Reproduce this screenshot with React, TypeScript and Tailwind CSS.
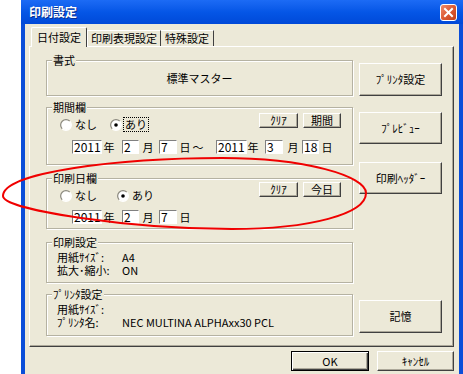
import React from 'react';

type Kids = { children?: React.ReactNode; className?: string };

const Btn: React.FC<Kids> = ({ children, className = '' }) => (
  <div
    className={`flex items-center justify-center bg-[#ECE9D8] border border-t-white border-l-white border-r-[#404040] border-b-[#404040] shadow-[inset_-1px_-1px_0_#ACA899] text-[11px] leading-none text-black ${className}`}
  >
    {children}
  </div>
);

const Group: React.FC<Kids & { label: string }> = ({ label, children, className = '' }) => (
  <div className={`relative border border-[#B5B2A2] shadow-[inset_1px_1px_0_#fff,1px_1px_0_#fff] ${className}`}>
    <span className="absolute left-[5px] top-[-7px] bg-[#ECE9D8] px-[1px] text-[11px] leading-[12px] whitespace-nowrap">
      {label}
    </span>
    {children}
  </div>
);

const Field: React.FC<{ v: string; className?: string }> = ({ v, className = '' }) => (
  <div
    className={`h-[14px] bg-white border border-t-[#808080] border-l-[#808080] border-r-white border-b-white pl-[1px] text-[12px] leading-[12px] ${className}`}
  >
    {v}
  </div>
);

const Radio: React.FC<{ on?: boolean }> = ({ on }) => (
  <svg width="12" height="12" viewBox="0 0 12 12" className="shrink-0">
    <circle cx="6" cy="6" r="5" fill="#fff" />
    <path d="M2.2 9.8 A5.3 5.3 0 0 1 9.8 2.2" fill="none" stroke="#8C8A80" strokeWidth="1.2" />
    <path d="M2.2 9.8 A5.3 5.3 0 0 0 9.8 2.2" fill="none" stroke="#fff" strokeWidth="1.2" />
    {on && <circle cx="6" cy="6" r="1.8" fill="#000" />}
  </svg>
);

const Ch: React.FC<{ c: string; className?: string }> = ({ c, className = '' }) => (
  <span className={`w-[12px] text-center text-[11px] leading-[12px] ${className}`}>{c}</span>
);

const Row: React.FC<{ k: string; v?: string }> = ({ k, v }) => (
  <div className="flex items-center h-[13px] text-[11px] leading-none">
    <span className="w-[65px] whitespace-nowrap">{k}</span>
    {v && <span className="whitespace-nowrap">{v}</span>}
  </div>
);

const DateRow: React.FC<{ y: string; m: string; d: string }> = ({ y, m, d }) => (
  <>
    <Field v={y} className="ml-[25px] w-[30px]" />
    <Ch c="年" className="ml-[1px]" />
    <Field v={m} className="ml-[7px] w-[17px]" />
    <Ch c="月" className="ml-[3px]" />
    <Field v={d} className="ml-[5px] w-[18px]" />
    <Ch c="日" className="ml-[2px]" />
  </>
);

export default function App() {
  return (
    <div className="relative w-[463px] h-[374px] overflow-hidden bg-white text-black font-['Noto_Sans_CJK_JP','Noto_Sans',sans-serif]">
      <div className="ml-[21px] w-[442px] h-[374px] flex flex-col">
        {/* title bar */}
        <div className="h-[24px] shrink-0 flex items-center pl-[8px] pr-[6px] bg-gradient-to-b from-[#1C6BF5] via-[#0556E6] to-[#0049D8]">
          <span className="text-white text-[12px] font-bold leading-none [text-shadow:1px_1px_0_#0B2F8F]">印刷設定</span>
          <div className="ml-auto w-[17px] h-[17px] rounded-[3px] border border-white bg-gradient-to-br from-[#EE8A6A] via-[#DD5A33] to-[#C1411A] flex items-center justify-center">
            <svg width="11" height="11" viewBox="0 0 11 11">
              <path d="M2 2 L9 9 M9 2 L2 9" stroke="#fff" strokeWidth="2" strokeLinecap="square" />
            </svg>
          </div>
        </div>

        {/* body */}
        <div className="flex-1 bg-[#ECE9D8] border-l-[4px] border-r-[4px] border-[#0A4ED9] pt-[3px]">
          <div className="ml-[4px] w-[425px]">
            {/* tabs */}
            <div className="flex items-end h-[19px] pl-[2px] text-[11px] leading-none">
              <div className="relative z-10 -mb-[1px] h-[20px] w-[56px] flex items-center justify-center bg-[#ECE9D8] border-t border-l border-r border-t-white border-l-white border-r-[#404040] rounded-t-[2px]">
                日付設定
              </div>
              <div className="h-[16px] w-[74px] flex items-center justify-center border-t border-l border-r border-t-white border-l-white border-r-[#404040]">
                印刷表現設定
              </div>
              <div className="h-[16px] w-[53px] flex items-center justify-center border-t border-r border-t-white border-r-[#404040]">
                特殊設定
              </div>
            </div>

            {/* panel */}
            <div className="h-[301px] flex pl-[16px] border border-t-white border-l-white border-r-[#404040] border-b-[#404040] shadow-[inset_-1px_-1px_0_#ACA899]">
              {/* left column */}
              <div className="w-[307px] flex flex-col">
                <Group label="書式" className="mt-[13px] h-[36px] flex items-center justify-center">
                  <span className="text-[11px] leading-none">標準マスター</span>
                </Group>

                <Group label="期間欄" className="mt-[11px] h-[58px] flex flex-col">
                  <div className="mt-[5px] flex items-start">
                    <div className="mt-[4px] flex items-center h-[15px] text-[11px] leading-none">
                      <div className="ml-[13px] w-[50px] flex items-center">
                        <Radio />
                        <span className="ml-[3px]">なし</span>
                      </div>
                      <Radio on />
                      <span className="ml-[1px] px-[1px] h-[15px] flex items-center border border-dotted border-black">あり</span>
                    </div>
                    <div className="ml-auto mr-[11px] flex gap-[5px]">
                      <Btn className="w-[39px] h-[15px]">ｸﾘｱ</Btn>
                      <Btn className="w-[38px] h-[15px]">期間</Btn>
                    </div>
                  </div>
                  <div className="mt-[8px] flex items-center">
                    <DateRow y="2011" m="2" d="7" />
                    <Ch c="〜" className="ml-[1px]" />
                    <Field v="2011" className="ml-[12px] w-[31px]" />
                    <Ch c="年" />
                    <Field v="3" className="ml-[6px] w-[18px]" />
                    <Ch c="月" className="ml-[4px]" />
                    <Field v="18" className="ml-[3px] w-[17px]" />
                    <Ch c="日" className="ml-[2px]" />
                  </div>
                </Group>

                <Group label="印刷日欄" className="mt-[13px] h-[51px] flex flex-col">
                  <div className="mt-[3px] flex items-start">
                    <div className="mt-[6px] flex items-center h-[15px] text-[11px] leading-none">
                      <div className="ml-[13px] w-[57px] flex items-center">
                        <Radio />
                        <span className="ml-[3px]">なし</span>
                      </div>
                      <Radio on />
                      <span className="ml-[3px]">あり</span>
                    </div>
                    <div className="ml-auto mr-[11px] flex gap-[5px]">
                      <Btn className="w-[39px] h-[15px]">ｸﾘｱ</Btn>
                      <Btn className="w-[38px] h-[15px]">今日</Btn>
                    </div>
                  </div>
                  <div className="mt-[7px] flex items-center">
                    <DateRow y="2011" m="2" d="7" />
                  </div>
                </Group>

                <Group label="印刷設定" className="mt-[13px] h-[41px] pt-[8px] pl-[10px]">
                  <Row k="用紙ｻｲｽﾞ:" v="A4" />
                  <Row k="拡大･縮小:" v="ON" />
                </Group>

                <Group label="ﾌﾟﾘﾝﾀ設定" className="mt-[11px] h-[42px] pt-[8px] pl-[10px]">
                  <Row k="用紙ｻｲｽﾞ:" />
                  <Row k="ﾌﾟﾘﾝﾀ名:" v="NEC MULTINA ALPHAxx30 PCL" />
                </Group>
              </div>

              {/* right column */}
              <div className="ml-[6px] w-[83px] flex flex-col">
                <Btn className="mt-[16px] h-[33px]">ﾌﾟﾘﾝﾀ設定</Btn>
                <Btn className="mt-[16px] h-[32px]">ﾌﾟﾚﾋﾞｭｰ</Btn>
                <Btn className="mt-[18px] h-[32px]">印刷ﾍｯﾀﾞｰ</Btn>
                <Btn className="mt-[106px] h-[33px]">記憶</Btn>
              </div>
            </div>

            {/* dialog buttons */}
            <div className="mt-[4px] flex justify-end gap-[8px]">
              <div className="w-[78px] h-[20px] flex items-center justify-center border border-black bg-[#ECE9D8] shadow-[inset_1px_1px_0_#fff,inset_-1px_-1px_0_#404040,inset_-2px_-2px_0_#ACA899] text-[11px] leading-none">
                OK
              </div>
              <Btn className="w-[77px] h-[20px]">ｷｬﾝｾﾙ</Btn>
            </div>
          </div>
        </div>
      </div>

      {/* red annotation ellipse */}
      <svg className="absolute inset-0 pointer-events-none" width="463" height="374" viewBox="0 0 463 374">
        <path
          d="M3 196 C3 172 120 158 222 158 C305 158 366 176 366 193 C366 214 310 229 232 229 C130 229 3 210 3 196 Z"
          fill="none"
          stroke="#F00000"
          strokeWidth="2"
        />
      </svg>
    </div>
  );
}
